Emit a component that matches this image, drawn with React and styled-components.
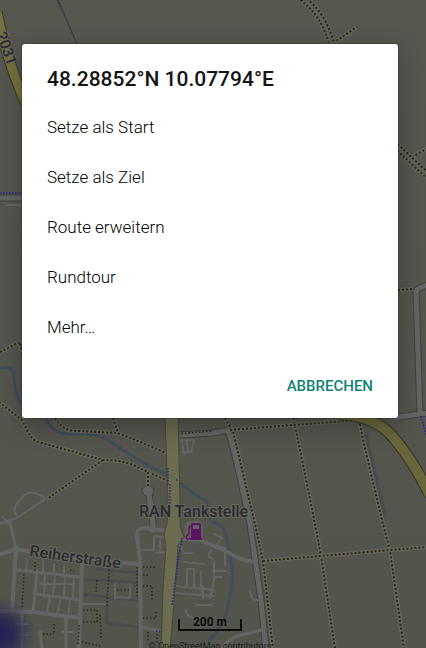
import React from "react";
import styled, { createGlobalStyle } from "styled-components";

const GlobalStyle = createGlobalStyle`
  *, *::before, *::after { box-sizing: border-box; }
  body {
    margin: 0;
    background: #54554d;
    font-family: Roboto, "Liberation Sans", sans-serif;
  }
`;

const Screen = styled.main`
  position: relative;
  height: 100vh;
  min-height: 480px;
  overflow: hidden;
  display: flex;
  flex-direction: column;
  justify-content: space-between;
  padding: 44px 28px 0 22px;
`;

const MapCanvas = styled.svg`
  position: absolute;
  inset: 0;
  width: 100%;
  height: 100%;
  display: block;

  path { fill: none; stroke-linejoin: round; }
  text { font-family: Roboto, "Liberation Sans", sans-serif; }
`;

const Dialog = styled.section`
  position: relative;
  display: flex;
  flex-direction: column;
  padding: 21px 0 14px;
  background: #fff;
  border-radius: 3px;
  box-shadow: 0 0 2px rgba(0, 0, 0, 0.5), 0 8px 24px rgba(0, 0, 0, 0.28);
`;

const Title = styled.h1`
  margin: 0 0 9px;
  padding: 0 25px;
  font-size: 21px;
  line-height: 28px;
  font-weight: 500;
  color: #141414;
`;

const Options = styled.ul`
  list-style: none;
  margin: 0;
  padding: 0;
`;

const Option = styled.button`
  display: block;
  width: 100%;
  height: 50px;
  padding: 0 25px;
  border: 0;
  background: none;
  text-align: left;
  font: 300 17px/24px Roboto, "Liberation Sans", sans-serif;
  color: #000;
  cursor: pointer;
`;

const Actions = styled.div`
  display: flex;
  justify-content: flex-end;
  padding: 16px 17px 0;
`;

const TextButton = styled.button`
  height: 36px;
  padding: 0 8px;
  border: 0;
  background: none;
  font: 500 15px/20px Roboto, "Liberation Sans", sans-serif;
  text-transform: uppercase;
  color: #108371;
  cursor: pointer;
`;

const MapFooter = styled.footer`
  position: relative;
  display: flex;
  flex-direction: column;
  align-items: center;
  gap: 9px;
  height: 33px;
`;

const ScaleBar = styled.div`
  flex: none;
  width: 64px;
  height: 16px;
  text-align: center;
  font-size: 12px;
  line-height: 14px;
  font-weight: 700;
  color: #0c0c0c;
  border: solid #0c0c0c;
  border-width: 0 2px 2px;
  clip-path: polygon(0 4px, 12px 4px, 12px 0, calc(100% - 12px) 0, calc(100% - 12px) 4px, 100% 4px, 100% 100%, 0 100%);
`;

const Attribution = styled.small`
  flex: none;
  font-size: 9px;
  line-height: 12px;
  white-space: nowrap;
  color: #20201e;
`;

const rivers = [
  "M-2 369C8 366 14 366 14 378C15 390 16 398 23 406",
  "M44 414C50 430 57 434 70 434C92 433 98 434 108 440C128 454 146 465 167 475C187 485 184 490 205 500C211 505 206 512 212 522C222 524 225 528 227 540C229 555 235 570 232 584C228 604 229 622 208 642",
];

const roads = [
  { w: 5, d: "M0 198H30M180 435L213 433L229 430M398 417L420 414L416 291Q417 288 428 285M420 414L430 413" },
  { w: 5, d: "M228 430C238 463 246 506 250 524L261 600L266 650M149 494L153 524V530" },
  { w: 4, d: "M-2 555L16 549L33 552L122 563L141 564M168 531L144 528Q136 528 137 536L140 558L141 650M16 549L12 611M82 564L79 650M-2 611L33 612L80 618M184 539L200 540L228 552Q240 561 256 562" },
  { w: 3, d: "M10 522L16 549M16 570L80 577M37 571L33 612M36 594L80 600M66 618V650M22 612L22 650M40 632L42 650M141 627L162 631M265 629L238 636Q226 640 221 650" },
  { w: 2, d: "M7 205H24M-2 524L17 518L45 499C35 489 26 492 22 498Q10 508 17 516M3 517L8 523M181 440H194M182 440L184 455M187 440L188 452M194 440L191 452H182M154 536V550H142M154 536L166 537V552L156 553M160 538V551M82 604H106M115 584V599M130 584V597M115 597L130 598" },
  { w: 2, d: "M43 561V571M54 564V573M64 566V575M27 560L26 570M45 574L44 593M55 576L53 595M65 577L64 597M74 578L73 599M40 584H72M50 597L47 613M61 598L57 615M70 600L68 617M15 624H28M15 635H28M62 632H74" },
  { w: 2, d: "M175 586L214 590M175 593L214 596M187 585V569H194V587M201 591V572M210 598L214 580V562M184 562L205 564M196 605H212M213 571H226M213 577H222M186 610Q187 620 200 618M211 550Q206 557 213 559M214 545L225 548V565M203 598V586M250 592Q252 602 260 600M214 534L222 538L218 544M180 545L184 553H192" },
];

const serviceRoads = [
  "M83 580L102 580L138 583M83 594L110 598L138 600M107 606V623L138 627M97 569L138 573",
  "M366 434L385 515",
];

const footpaths = [
  "M-1 402L22 420C29 433 30 441 42 443L103 460Q125 460 137 467L168 481",
  "M55 418C63 428 65 431 80 431L118 433L143 443L168 454",
  "M113 418L118 433",
  "M103 460L47 499",
  "M148 472V487",
  "M0 352L20 342L22 354",
  "M225 418L233 431L255 524L263 561L273 649",
  "M293 418L296 430L315 524L321 556L335 649",
  "M360 424L363 440L383 524L390 551L404 649",
  "M263 561L321 556L390 550L428 547",
  "M333 43L357 27",
  "M412 157L428 148",
  "M398 290L413 289",
  "M230 430L293 425L360 420",
];

const smallPaths = [
  "M24 574L22 608M109 566L107 606M137 567V598M97 580L96 594M117 590H130M83 610H97V622H83M100 615L101 640M79 625L78 645M82 642L100 646M143 567H156M143 575H149M143 586H152V600M143 618H156V611M43 634H54M54 624V634M35 562V571M70 570H74M148 632V642M157 634V643",
  "M178 434L213 431",
  "M57 -1L60 6",
];

const doublePaths = ["M302 -2Q324 14 332 45", "M396 146L428 176"];

const blueDots = "M0 193H23M421 416L428 442M168 468V484M170 484V510M182 538L178 560L172 606M156 631L162 632M176 480H178";

const options = ["Setze als Start", "Setze als Ziel", "Route erweitern", "Rundtour", "Mehr…"];

function FuelPump() {
  return (
    <g>
      <rect x="185" y="521" width="18" height="20" rx="6" fill="#66665f" opacity="0.7" />
      <path d="M192 523H200L201 524V538H202V540H190V538H191V524Z" style={{ fill: "#591463" }} />
      <rect x="193" y="525" width="6" height="4" fill="#62625e" />
      <path d="M191 526Q189 526 189 529V533L186 537Q187 541 190 538" stroke="#591463" strokeWidth="1.3" />
    </g>
  );
}

function MapView() {
  return (
    <MapCanvas viewBox="0 0 426 648" preserveAspectRatio="xMidYMin slice" role="img" aria-label="Karte">
      <defs>
        <linearGradient id="ground" x1="0" y1="0" x2="0" y2="1">
          <stop offset="0" stopColor="#56574f" />
          <stop offset="1" stopColor="#53544c" />
        </linearGradient>
        <radialGradient id="locationGlow">
          <stop offset="0" stopColor="#20205c" />
          <stop offset="0.4" stopColor="#242452" stopOpacity="0.85" />
          <stop offset="1" stopColor="#2c2c50" stopOpacity="0" />
        </radialGradient>
      </defs>
      <rect width="426" height="648" fill="url(#ground)" />

      {rivers.map((d) => <path key={d} d={d} stroke="#414d59" strokeWidth="3" />)}
      <path d="M58 0L77 44" stroke="#3e3e40" strokeWidth="1.5" />

      {serviceRoads.map((d) => <path key={d} d={d} stroke="#4b4b4d" strokeWidth="3" strokeLinecap="round" />)}
      {roads.slice(0, 2).map(({ d, w }) => <path key={d} d={d} stroke="#414140" strokeWidth={w + 2} />)}
      {roads.map(({ d, w }) => <path key={d} d={d} stroke="#646465" strokeWidth={w} strokeLinecap="round" />)}
      <circle cx="148" cy="491" r="6" fill="#454544" />
      <circle cx="148" cy="491" r="5" fill="#646465" />
      <path d="M149 494L153 524" stroke="#646465" strokeWidth="5" />

      {footpaths.map((d) => (
        <g key={d}>
          <path d={d} stroke="#66665f" strokeWidth="4" />
          <path d={d} stroke="#29280f" strokeWidth="2" strokeDasharray="2 2" />
        </g>
      ))}
      {doublePaths.map((d) => (
        <g key={d}>
          <path d={d} stroke="#63635c" strokeWidth="9" />
          <path d={d} stroke="#29280f" strokeWidth="7" strokeDasharray="2 2" />
          <path d={d} stroke="#5f5f5c" strokeWidth="3" />
        </g>
      ))}
      {smallPaths.map((d) => <path key={d} d={d} stroke="#2b2b1a" strokeWidth="1.5" strokeDasharray="1.5 2" />)}

      <path d="M-3 12Q7 62 26 104" stroke="#37362a" strokeWidth="11" />
      <path d="M-3 12Q7 62 26 104" stroke="#75723f" strokeWidth="9" />
      <path d="M340 414Q375 416 393 437Q414 462 430 495" stroke="#37362a" strokeWidth="12" />
      <path d="M340 414Q375 416 393 437Q414 462 430 495" stroke="#68663a" strokeWidth="10" />
      <path d="M165 416L168 500L167 524L164 534L166 545L163 590L161 650H170L175 590L178 545L184 537L180 526V500L178 416Z" style={{ fill: "#6b6c50" }} stroke="#484836" strokeWidth="1" />
      <path d={blueDots} stroke="#24248c" strokeWidth="1.5" strokeDasharray="1.5 1.5" />

      <circle cx="0" cy="634" r="36" fill="url(#locationGlow)" />
      <FuelPump />

      <g fill="#2b2b2e" stroke="#66665e" strokeWidth="2" paintOrder="stroke" strokeLinejoin="round">
        <text x="139" y="517" fontSize="16" fontWeight="500">RAN Tankstelle</text>
        <text transform="translate(29 556) rotate(8)" fontSize="16" fontWeight="500">Reiherstraße</text>
        <text transform="translate(-4 34) rotate(70)" fontSize="15" fontWeight="500">2031</text>
      </g>
    </MapCanvas>
  );
}

export default function App() {
  return (
    <>
      <GlobalStyle />
      <Screen>
        <MapView />
        <Dialog role="dialog" aria-labelledby="dialog-title">
          <Title id="dialog-title">48.28852°N 10.07794°E</Title>
          <Options>
            {options.map((label) => (
              <li key={label}>
                <Option type="button">{label}</Option>
              </li>
            ))}
          </Options>
          <Actions>
            <TextButton type="button">Abbrechen</TextButton>
          </Actions>
        </Dialog>
        <MapFooter>
          <ScaleBar>200 m</ScaleBar>
          <Attribution>© OpenStreetMap contributors</Attribution>
        </MapFooter>
      </Screen>
    </>
  );
}
